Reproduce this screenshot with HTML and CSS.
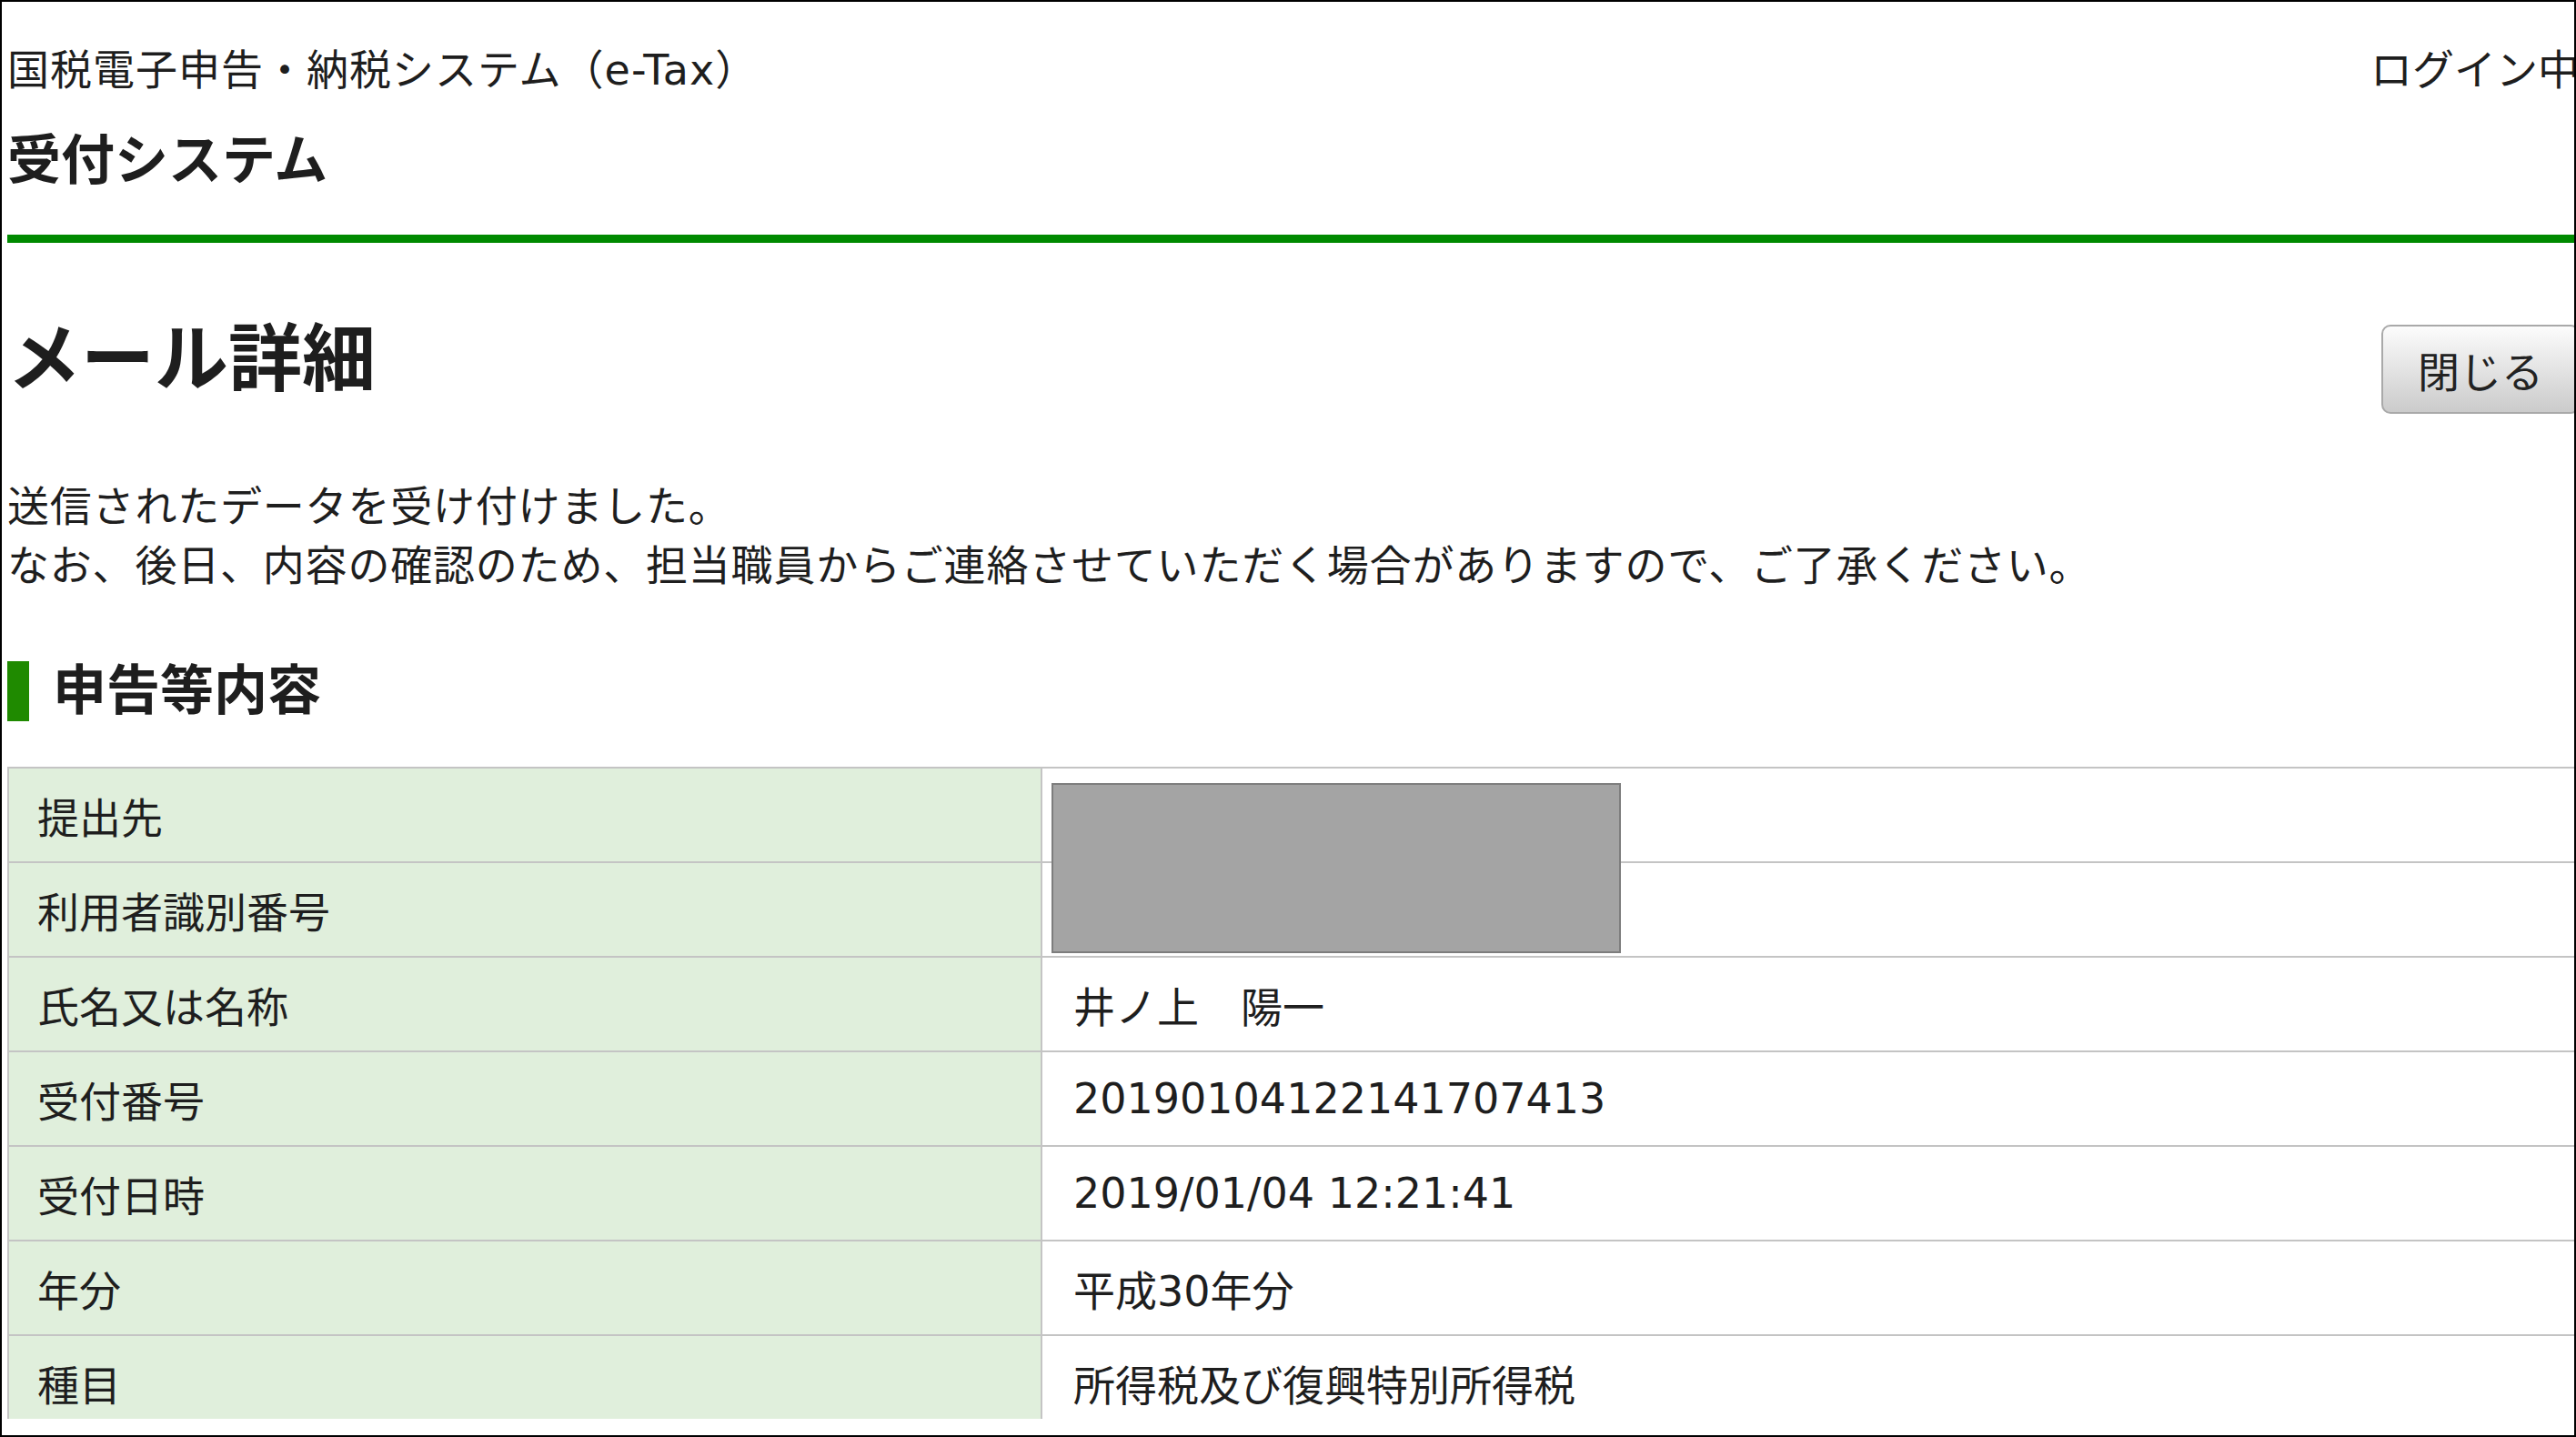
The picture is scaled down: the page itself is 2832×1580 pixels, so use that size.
FILE: index.html
```html
<!DOCTYPE html>
<html lang="ja">
<head>
  <meta charset="UTF-8">
  <meta name="viewport" content="width=device-width, initial-scale=1.0">
  <title>メール詳細 | 受付システム</title>
  <link rel="stylesheet" href="styles.css">
</head>
<body>
  <div class="frame">
    <div class="viewport">
      <div class="page">
        <header class="site-header">
          <div class="site-bar">
            <span class="site-title">国税電子申告・納税システム（e-Tax）</span>
            <span class="login-state">ログイン中</span>
          </div>
          <div class="system-name">受付システム</div>
        </header>

        <main class="content">
          <div class="title-row">
            <h1>メール詳細</h1>
            <button type="button" class="btn-close">閉じる</button>
          </div>

          <p class="message">
            送信されたデータを受け付けました。<br>
            なお、後日、内容の確認のため、担当職員からご連絡させていただく場合がありますので、ご了承ください。
          </p>

          <h2 class="section-title">申告等内容</h2>

          <div class="detail">
            <table class="detail-table">
              <tbody>
                <tr>
                  <th>提出先</th>
                  <td></td>
                </tr>
                <tr>
                  <th>利用者識別番号</th>
                  <td></td>
                </tr>
                <tr>
                  <th>氏名又は名称</th>
                  <td>井ノ上　陽一</td>
                </tr>
                <tr>
                  <th>受付番号</th>
                  <td>20190104122141707413</td>
                </tr>
                <tr>
                  <th>受付日時</th>
                  <td>2019/01/04 12:21:41</td>
                </tr>
                <tr>
                  <th>年分</th>
                  <td>平成30年分</td>
                </tr>
                <tr>
                  <th>種目</th>
                  <td>所得税及び復興特別所得税</td>
                </tr>
              </tbody>
            </table>
            <!-- 提出先・利用者識別番号は塗りつぶし -->
            <div class="redact"></div>
          </div>
        </main>
      </div>
    </div>
  </div>
</body>
</html>
```

FILE: styles.css
```css
/* reset */
* {
  margin: 0;
  padding: 0;
  box-sizing: border-box;
}
body {
  font-family: "DejaVu Sans", "Noto Sans CJK JP", sans-serif;
  font-size: 46px;
  color: #1e1e1e;
  background-color: #fff;
}

/* screenshot frame */
.frame {
  width: 2832px;
  height: 1580px;
  border: 2px solid #000;
  background-color: #fff;
}
.viewport {
  height: 1558px;
  overflow: hidden;
}
.page {
  width: 2828px;
  margin-left: 6px;
}

/* header */
.site-header {
  padding-top: 42px;
  padding-bottom: 43px;
  border-bottom: 9px solid #008a00;
}
.site-bar {
  display: flex;
  justify-content: space-between;
  line-height: 67.5px;
}
.site-title {
  letter-spacing: 1px;
}
.system-name {
  margin-top: 27px;
  font-size: 59px;
  font-weight: bold;
  line-height: 76px;
}

/* title */
.title-row {
  display: flex;
  justify-content: space-between;
  align-items: flex-start;
  margin-top: 78px;
}
h1 {
  font-size: 81px;
  font-weight: bold;
  line-height: 100px;
}
.btn-close {
  margin-top: 12px;
  width: 218px;
  height: 98px;
  font-family: inherit;
  font-size: 46px;
  color: #222;
  background: linear-gradient(#fcfcfc, #cbcbcb);
  border: 2px solid #a9a9a9;
  border-radius: 10px;
  cursor: pointer;
}

.message {
  margin-top: 70px;
  line-height: 65px;
  letter-spacing: 0.8px;
}

.section-title {
  margin-top: 72px;
  padding-left: 26px;
  border-left: 24px solid #1f8a00;
  font-size: 59px;
  font-weight: bold;
  line-height: 66px;
}

/* detail table */
.detail {
  position: relative;
  margin-top: 50px;
}
.detail-table {
  width: 100%;
  border-collapse: separate;
  border-spacing: 0;
  border-top: 2px solid #c4c4c4;
}
.detail-table th,
.detail-table td {
  height: 104px;
  text-align: left;
  font-weight: normal;
  vertical-align: middle;
  border-bottom: 2px solid #c4c4c4;
}
.detail-table th {
  width: 1138px;
  padding-left: 31px;
  background-color: #e0efdc;
  border-left: 2px solid #c4c4c4;
  border-right: 2px solid #c4c4c4;
}
.detail-table td {
  padding-left: 34px;
}
.redact {
  position: absolute;
  left: 1148px;
  top: 18px;
  width: 626px;
  height: 187px;
  background-color: #a4a4a4;
  border: 2px solid #7d7d7d;
}
```
